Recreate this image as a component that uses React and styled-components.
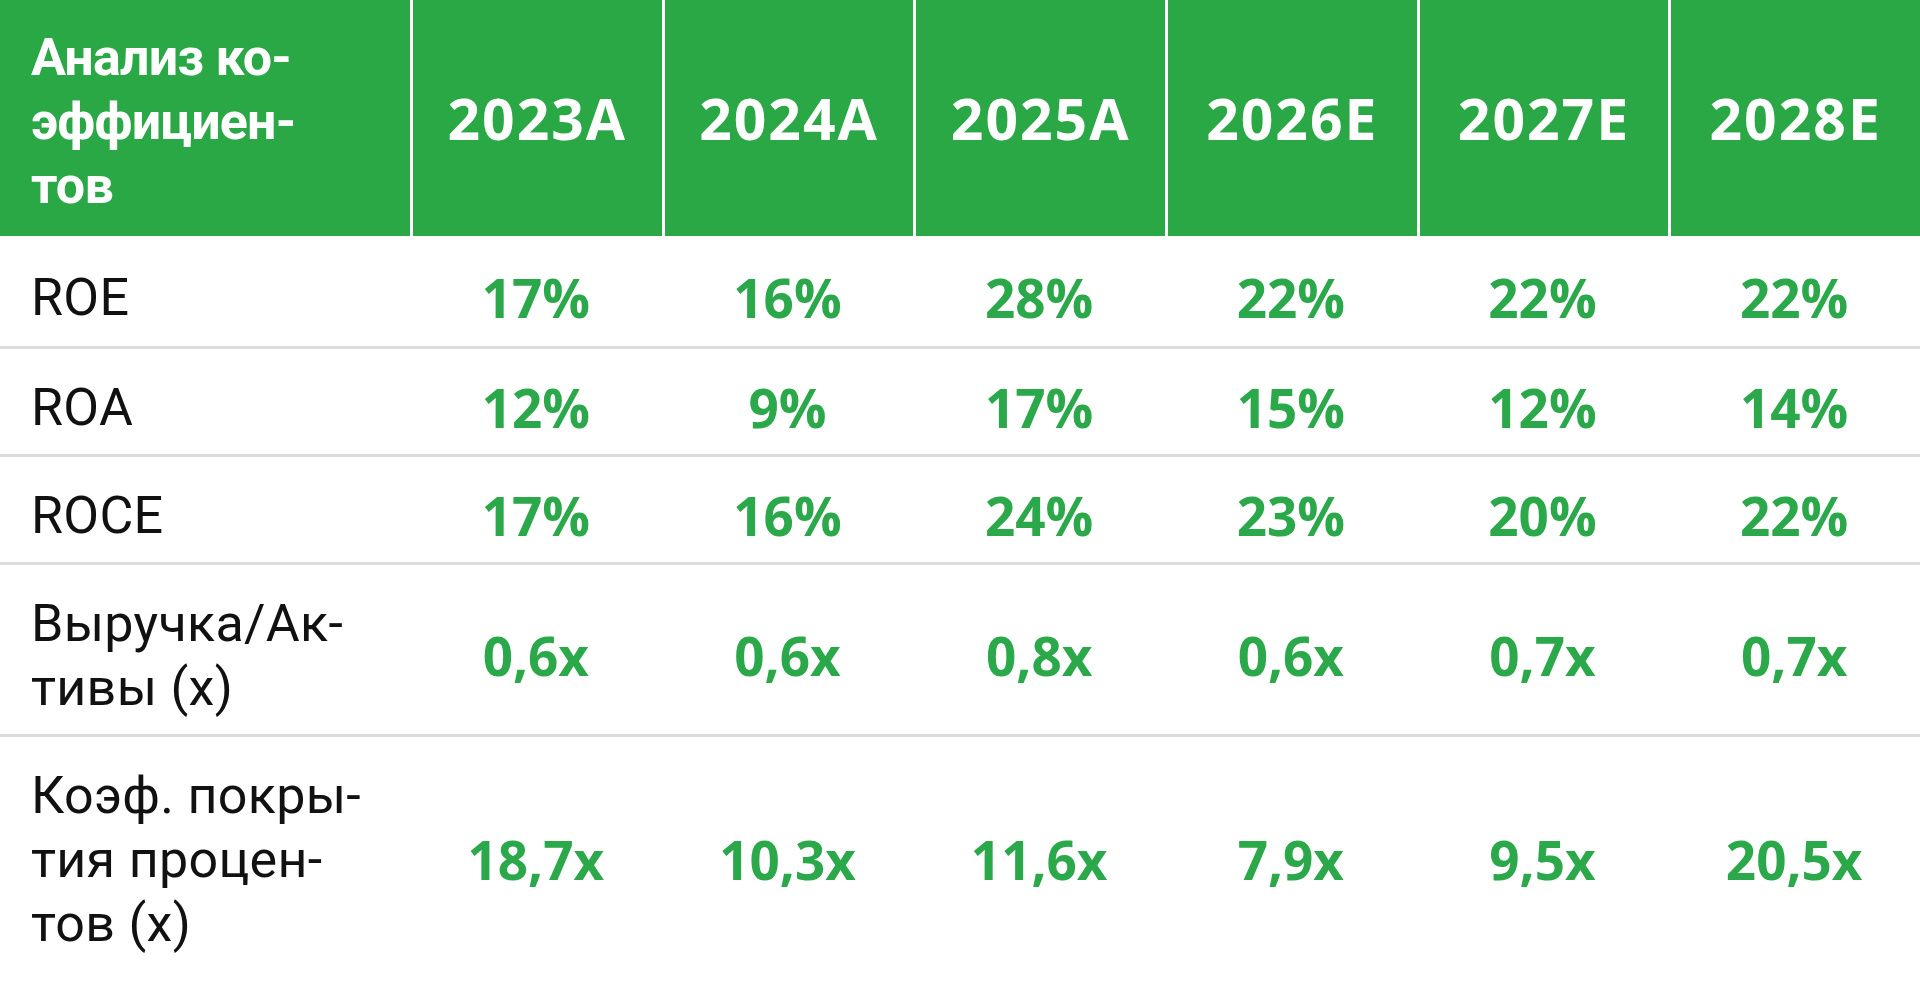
import React from 'react';
import styled, { createGlobalStyle } from 'styled-components';

const color = {
  green: '#29a845',
  greenText: '#2aa84a',
  white: '#ffffff',
  black: '#111111',
  rule: '#dcdcdc',
};

const GlobalStyle = createGlobalStyle`
  html, body {
    margin: 0;
    padding: 0;
    background: ${color.white};
  }
  body {
    font-family: Roboto, "Noto Sans", sans-serif;
  }
`;

const Table = styled.div`
  display: grid;
  grid-template-columns: 410px repeat(6, 1fr);
  width: 1920px;
`;

const HeadCell = styled.div`
  display: flex;
  align-items: center;
  justify-content: ${p => (p.first ? 'flex-start' : 'center')};
  height: 236px;
  box-sizing: border-box;
  padding: ${p => (p.first ? '8px 0 0 31px' : '0')};
  background: ${color.green};
  color: ${color.white};
  border-left: ${p => (p.first ? 'none' : `3px solid ${color.white}`)};
`;

const TitleText = styled.div`
  font-family: Roboto, "Noto Sans", sans-serif;
  font-weight: 700;
  font-size: 52px;
  line-height: 64px;
  letter-spacing: -0.8px;
`;

const YearText = styled.div`
  font-family: "Open Sans", sans-serif;
  font-weight: 700;
  font-size: 57px;
  letter-spacing: 2px;
  line-height: 1;
`;

const Cell = styled.div`
  display: flex;
  align-items: center;
  justify-content: ${p => (p.label ? 'flex-start' : 'center')};
  box-sizing: border-box;
  padding: ${p => (p.tall ? '30px 0 16px' : '27px 0 14px')};
  padding-left: ${p => (p.label ? '31px' : '0')};
  border-bottom: ${p => (p.last ? 'none' : `3px solid ${color.rule}`)};
`;

const LabelText = styled.div`
  font-family: Roboto, "Noto Sans", sans-serif;
  font-weight: 400;
  font-size: 52px;
  line-height: 64px;
  letter-spacing: 0.3px;
  color: ${color.black};
`;

const ValueText = styled.div`
  font-family: "Open Sans", sans-serif;
  font-weight: 700;
  font-size: 53px;
  line-height: 64px;
  color: ${color.greenText};
`;

const years = ['2023A', '2024A', '2025A', '2026E', '2027E', '2028E'];

const rows = [
  { label: ['ROE'], values: ['17%', '16%', '28%', '22%', '22%', '22%'] },
  { label: ['ROA'], values: ['12%', '9%', '17%', '15%', '12%', '14%'] },
  { label: ['ROCE'], values: ['17%', '16%', '24%', '23%', '20%', '22%'] },
  { label: ['Выручка/Ак-', 'тивы (x)'], values: ['0,6x', '0,6x', '0,8x', '0,6x', '0,7x', '0,7x'] },
  {
    label: ['Коэф. покры-', 'тия процен-', 'тов (x)'],
    values: ['18,7x', '10,3x', '11,6x', '7,9x', '9,5x', '20,5x'],
  },
];

const Lines = ({ lines }) =>
  lines.map((line, i) => (
    <React.Fragment key={i}>
      {i > 0 && <br />}
      {line}
    </React.Fragment>
  ));

const App = () => (
  <>
    <GlobalStyle />
    <Table>
      <HeadCell first>
        <TitleText>
          <Lines lines={['Анализ ко-', 'эффициен-', 'тов']} />
        </TitleText>
      </HeadCell>
      {years.map(y => (
        <HeadCell key={y}>
          <YearText>{y}</YearText>
        </HeadCell>
      ))}
      {rows.map((row, r) => {
        const last = r === rows.length - 1;
        const tall = r === 0;
        return (
          <React.Fragment key={r}>
            <Cell label last={last} tall={tall}>
              <LabelText>
                <Lines lines={row.label} />
              </LabelText>
            </Cell>
            {row.values.map((v, i) => (
              <Cell key={i} last={last} tall={tall}>
                <ValueText>{v}</ValueText>
              </Cell>
            ))}
          </React.Fragment>
        );
      })}
    </Table>
  </>
);

export default App;
